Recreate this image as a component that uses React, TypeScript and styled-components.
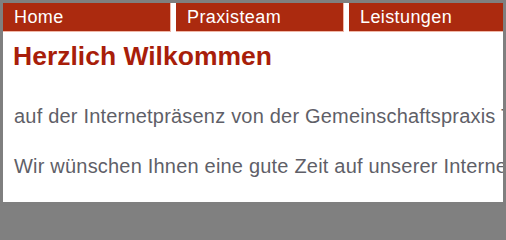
import styled, { createGlobalStyle } from "styled-components";

const Global = createGlobalStyle`
    html, body{
        margin: 0;
        padding: 0;
        background: #808080;
    }
`

const Frame = styled.div`
    width: 506px;
    height: 206px;
    box-sizing: border-box;
    border-style: solid;
    border-color: #7f7f7f;
    border-width: 3px 3px 4px 3px;
    background: #ffffff;
    overflow: hidden;
    font-family: "Liberation Sans", Arial, sans-serif;
`

const Nav = styled.nav`
    display: flex;
    gap: 5px;
    height: 29px;
    white-space: nowrap;
`

const Tab = styled.a<{ $last?: boolean }>`
    flex: ${({ $last }) => ($last ? "1 0 auto" : "0 0 168px")};
    box-sizing: border-box;
    height: 29px;
    padding: 4px 0 0 11px;
    background: #ab2a0f;
    border-bottom: 1px solid #f0b8a8;
    border-right: ${({ $last }) => ($last ? "none" : "1px solid #f0b8a8")};
    color: #ffffff;
    font-size: 18px;
    line-height: 20px;
    letter-spacing: 0.4px;
    text-decoration: none;
`

const Content = styled.main`
    padding: 0 10px;
    white-space: nowrap;
`

const Title = styled.h1`
    margin: 8px 0 32px 0;
    color: #a81e0a;
    font-size: 26.5px;
    line-height: 32px;
    font-weight: bold;
`

const Paragraph = styled.p`
    margin: 0 0 26px 1px;
    color: #5f5f68;
    font-size: 20px;
    line-height: 24px;
    letter-spacing: 0.2px;
`

const links = ["Home", "Praxisteam", "Leistungen"];

export default function App(){
    return(
        <>
            <Global />
            <Frame>
                <Nav>
                    {links.map((l, i) => (
                        <Tab key={l} href="#" $last={i === links.length - 1}>{l}</Tab>
                    ))}
                </Nav>
                <Content>
                    <Title>Herzlich Wilkommen</Title>
                    <Paragraph>auf der Internetpräsenz von der Gemeinschaftspraxis Tiefenbach</Paragraph>
                    <Paragraph>Wir wünschen Ihnen eine gute Zeit auf unserer Internetseite.</Paragraph>
                </Content>
            </Frame>
        </>
    )
}
